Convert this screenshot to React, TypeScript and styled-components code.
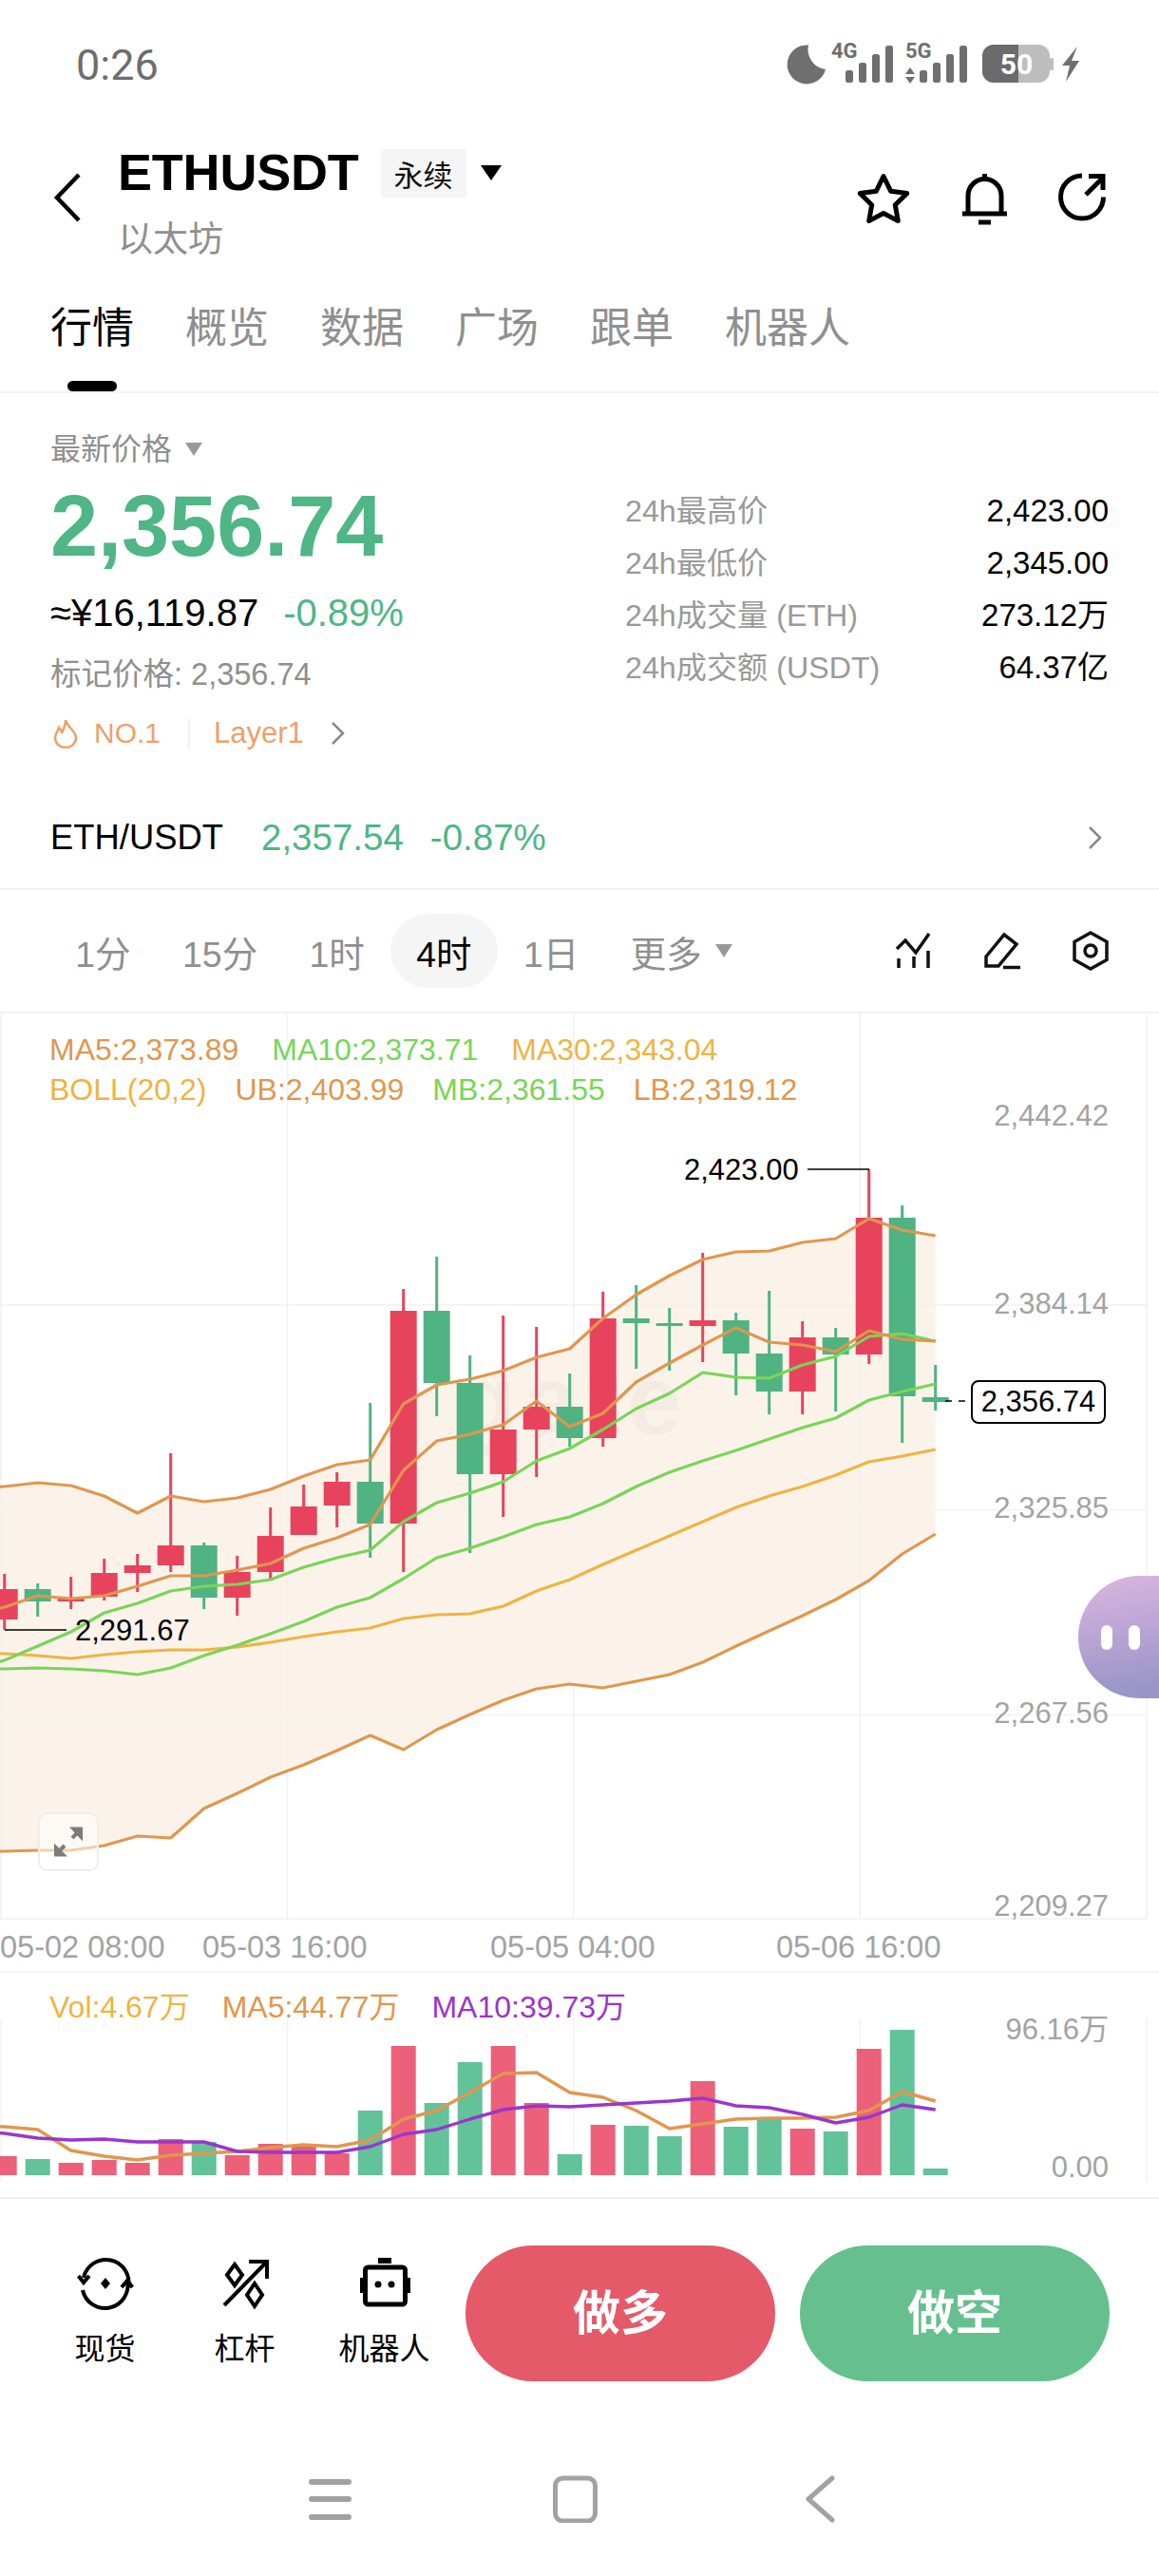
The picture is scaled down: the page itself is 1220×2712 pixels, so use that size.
import React from 'react'
import styled, { createGlobalStyle } from 'styled-components'

const GlobalStyle = createGlobalStyle`
  html, body {
    margin: 0;
    padding: 0;
    background: #fff;
  }
  body {
    font-family: "Liberation Sans", "Noto Sans CJK SC", sans-serif;
    overflow: hidden;
  }
  * {
    box-sizing: border-box;
  }
`

const colors = {
  up: '#4fb685',
  gray: '#8f8f8f',
  axis: '#a3a3a3',
  line: '#f3f3f3',
  orange: '#e0974d',
  lime: '#79d557',
  yellow: '#eeb443',
  purple: '#9b35cc',
  candleRed: '#e8435c',
  candleGreen: '#4fb382',
  barRed: '#ec6079',
  barGreen: '#62c29a',
  band: '#fbf3ea',
}

const Page = styled.div`
  width: 1220px;
  height: 2712px;
  display: flex;
  flex-direction: column;
  background: #fff;
  overflow: hidden;
`

const StatusBar = styled.div`
  height: 136px;
  display: flex;
  align-items: center;
  justify-content: space-between;
  padding: 0 45px 0 80px;
`

const Clock = styled.div`
  font-family: Roboto, sans-serif;
  font-size: 45px;
  color: #6d6d6d;
`

const Header = styled.div`
  height: 144px;
  display: flex;
  align-items: center;
  padding: 0 50px 0 52px;
`

const BackButton = styled.svg`
  width: 36px;
  height: 54px;
  margin-right: 36px;
`

const TitleBlock = styled.div`
  margin-top: 11px;
  flex: 1;
`

const TitleRow = styled.div`
  height: 51px;
  display: flex;
  align-items: center;
`

const Symbol = styled.div`
  font-size: 54px;
  line-height: 51px;
  font-weight: bold;
  letter-spacing: -0.2px;
  color: #000;
  margin-top: -2px;
`

const Badge = styled.div`
  width: 90px;
  height: 51px;
  margin-left: 23px;
  background: #f5f5f5;
  display: flex;
  align-items: center;
  justify-content: center;
  font-size: 31px;
  color: #111;
`

const Caret = styled.div<{ $w: number; $h: number; $color: string }>`
  width: 0;
  height: 0;
  border-left: ${p => p.$w / 2}px solid transparent;
  border-right: ${p => p.$w / 2}px solid transparent;
  border-top: ${p => p.$h}px solid ${p => p.$color};
  margin-left: ${p => (p.$w > 20 ? 15 : 14)}px;
`

const SubTitle = styled.div`
  margin-top: 26px;
  font-size: 37px;
  line-height: 37px;
  color: ${colors.gray};
`

const HeaderIcons = styled.div`
  display: flex;
  gap: 44px;
  margin-top: 1px;
`

const HeaderIcon = styled.svg`
  width: 60px;
  height: 60px;
  fill: none;
  stroke: #000;
  stroke-width: 5;
`

const TabBar = styled.div`
  height: 134px;
  display: flex;
  gap: 54px;
  padding-left: 53px;
  border-bottom: 2px solid ${colors.line};
`

const Tab = styled.div<{ $active?: boolean }>`
  position: relative;
  padding-top: 44px;
  font-size: 44px;
  line-height: 44px;
  color: ${p => (p.$active ? '#000' : colors.gray)};

  ${p => p.$active && `
    &::after {
      content: "";
      position: absolute;
      left: 18px;
      bottom: 0;
      width: 52px;
      height: 11px;
      border-radius: 6px;
      background: #000;
    }
  `}
`

const InfoSection = styled.div`
  height: 417px;
  display: flex;
  justify-content: space-between;
  padding: 39px 53px 0;
`

const InfoLeft = styled.div`
  display: flex;
  flex-direction: column;
`

const LabelRow = styled.div`
  display: flex;
  align-items: center;
  font-size: 32px;
  line-height: 40px;
  color: ${colors.gray};
`

const BigPrice = styled.div`
  margin-top: 16px;
  font-size: 90px;
  line-height: 90px;
  font-weight: bold;
  color: ${colors.up};
`

const ConvertRow = styled.div`
  margin-top: 24px;
  display: flex;
  gap: 26px;
  line-height: 44px;
`

const Converted = styled.span`
  font-size: 40px;
  color: #000;
`

const Change = styled.span`
  font-size: 40px;
  color: ${colors.up};
`

const MarkPrice = styled.div`
  margin-top: 23px;
  font-size: 32.5px;
  line-height: 40px;
  color: ${colors.gray};
`

const TagRow = styled.div`
  margin-top: 22px;
  height: 40px;
  display: flex;
  align-items: center;
  font-size: 30px;
  color: #eda06a;
`

const TagIcon = styled.svg`
  width: 28px;
  height: 32px;
  margin: 0 16px 0 2px;
  fill: none;
  stroke: #eda06a;
  stroke-width: 2.5;
`

const TagDivider = styled.div`
  width: 2px;
  height: 33px;
  margin: 0 25px 0 29px;
  background: #f2f2f2;
`

const TagCategory = styled.span`
  font-size: 31px;
`

const Chevron = styled.svg<{ $ml?: number }>`
  width: 18px;
  height: 28px;
  margin-left: ${p => p.$ml ?? 0}px;
  fill: none;
  stroke: #888;
  stroke-width: 2.5;
`

const StatTable = styled.div`
  width: 509px;
  margin-top: 57px;
`

const StatRow = styled.div`
  height: 55px;
  display: flex;
  align-items: center;
  justify-content: space-between;
  line-height: 40px;
`

const StatLabel = styled.span`
  font-size: 32.2px;
  color: #9a9a9a;
`

const StatValue = styled.span`
  font-size: 33px;
  color: #000;
`

const PairRow = styled.div`
  height: 106px;
  padding: 0 58px 2px 53px;
  display: flex;
  align-items: center;
  border-bottom: 2px solid ${colors.line};
`

const PairName = styled.div`
  font-size: 36.4px;
  color: #000;
  margin-right: 40px;
`

const PairValue = styled.div`
  font-size: 38.5px;
  color: ${colors.up};
  margin-right: 28px;
`

const Spacer = styled.div`
  flex: 1;
`

const RangeRow = styled.div`
  height: 130px;
  padding: 0 50px 0 52px;
  display: flex;
  align-items: center;
  border-bottom: 2px solid ${colors.line};
`

const RangeItem = styled.div<{ $active?: boolean }>`
  height: 78px;
  padding: 0 27.2px;
  display: flex;
  align-items: center;
  font-size: 37.5px;
  border-radius: 39px;
  color: ${p => (p.$active ? '#000' : colors.gray)};
  background: ${p => (p.$active ? '#f5f5f5' : 'transparent')};
`

const RangeIcons = styled.div`
  display: flex;
  gap: 49px;
`

const RangeIcon = styled.svg`
  width: 44px;
  height: 44px;
  fill: none;
  stroke: #111;
  stroke-width: 3.5;
`

const ChartPanel = styled.div`
  position: relative;
  height: 1010px;
  border-bottom: 2px solid ${colors.line};
`

const VolumePanel = styled.div`
  position: relative;
  height: 238px;
  border-bottom: 2px solid #f0f0f0;
`

const ChartCanvas = styled.svg`
  position: absolute;
  left: 0;
  top: 0;
  width: 1220px;
`

const Legend = styled.div<{ $top: number }>`
  position: relative;
  padding: ${p => p.$top}px 0 0 52px;
`

const LegendRow = styled.div<{ $gap: number }>`
  display: flex;
  gap: ${p => p.$gap}px;
  height: 42px;
  line-height: 42px;
  font-size: 32px;
  white-space: nowrap;
`

const LegendItem = styled.span<{ $color: string }>`
  color: ${p => p.$color};
`

const ChartLabel = styled.div<{ $x: number; $y: number; $w?: number; $align?: string; $color?: string; $size?: number }>`
  position: absolute;
  left: ${p => p.$x}px;
  top: ${p => p.$y}px;
  width: ${p => p.$w ?? 200}px;
  transform: translateY(-50%);
  text-align: ${p => p.$align ?? 'left'};
  font-size: ${p => p.$size ?? 31}px;
  line-height: 40px;
  color: ${p => p.$color ?? '#000'};
  white-space: nowrap;
`

const PriceTag = styled.div`
  position: absolute;
  left: 1022px;
  top: 386px;
  width: 142px;
  height: 46px;
  display: flex;
  align-items: center;
  justify-content: center;
  border: 2px solid #000;
  border-radius: 8px;
  background: #fff;
  font-size: 31px;
  color: #000;
`

const ExpandButton = styled.div`
  position: absolute;
  left: 40px;
  top: 841px;
  width: 64px;
  height: 62px;
  display: flex;
  align-items: center;
  justify-content: center;
  border: 2px solid #f0eeeb;
  border-radius: 10px;
  background: rgba(255, 255, 255, 0.55);
`

const FloatBot = styled.div`
  position: absolute;
  right: 0;
  top: 592px;
  width: 85px;
  height: 129px;
  padding-left: 24px;
  display: flex;
  align-items: center;
  gap: 17px;
  border-radius: 65px 0 0 65px;
  background: linear-gradient(170deg, #dcb6e0 0%, #9a95c8 90%);
`

const BotEye = styled.div`
  width: 12px;
  height: 26px;
  border-radius: 6px;
  background: #fff;
`

const ActionBar = styled.div`
  height: 245px;
  padding: 49px 52px 0 37px;
  display: flex;
  align-items: flex-start;
`

const Tool = styled.div`
  width: 147px;
  padding-top: 10px;
  display: flex;
  flex-direction: column;
  align-items: center;
  font-size: 32px;
  color: #000;
`

const ToolIcon = styled.svg`
  width: 60px;
  height: 60px;
  fill: none;
  stroke: #000;
  stroke-width: 4;
`

const ToolLabel = styled.div`
  margin-top: 19px;
  line-height: 40px;
`

const TradeButton = styled.div<{ $color: string }>`
  width: 326px;
  height: 143px;
  padding-bottom: 10px;
  margin-left: ${p => (p.$color === '#e45a69' ? 12 : 26)}px;
  display: flex;
  align-items: center;
  justify-content: center;
  border-radius: 72px;
  background: ${p => p.$color};
  color: #fff;
  font-size: 50px;
  font-weight: 700;
`

const NavBar = styled.div`
  padding: 46px 0 0 325px;
  display: flex;
  gap: 212px;
`

const NavIcon = styled.svg<{ $w: number }>`
  width: ${p => p.$w}px;
  height: 50px;
  fill: none;
  stroke: #a2a2a2;
  stroke-width: 5;
`

type Candle = [string, number, number, number, number]

const r = 'r'
const g = 'g'

const candles: Candle[] = [
  [r, 1657, 1673, 1705, 1716],
  [g, 1667, 1673, 1686, 1702],
  [r, 1660, 1682, 1686, 1694],
  [r, 1641, 1656, 1681, 1685],
  [r, 1636, 1648, 1656, 1676],
  [r, 1530, 1627, 1648, 1655],
  [g, 1624, 1627, 1682, 1694],
  [r, 1638, 1655, 1682, 1701],
  [r, 1587, 1617, 1655, 1662],
  [r, 1563, 1586, 1616, 1616],
  [r, 1550, 1560, 1585, 1608],
  [g, 1477, 1560, 1604, 1640],
  [r, 1357, 1380, 1604, 1655],
  [g, 1323, 1380, 1456, 1491],
  [g, 1427, 1456, 1552, 1635],
  [r, 1385, 1505, 1552, 1597],
  [r, 1397, 1481, 1505, 1555],
  [g, 1446, 1481, 1514, 1523],
  [r, 1360, 1388, 1514, 1523],
  [g, 1353, 1388, 1393, 1441],
  [g, 1377, 1393, 1396, 1443],
  [r, 1319, 1390, 1396, 1434],
  [g, 1382, 1390, 1425, 1469],
  [g, 1359, 1425, 1465, 1489],
  [r, 1391, 1408, 1465, 1489],
  [g, 1398, 1408, 1426, 1486],
  [r, 1231, 1282, 1426, 1436],
  [g, 1269, 1282, 1470, 1519],
  [g, 1437, 1471, 1476, 1485],
]

// the first value of each series sits one candle left of the screen edge
const ub = [1566, 1565, 1561, 1564, 1575, 1593, 1575, 1581, 1577, 1568, 1554, 1542, 1537, 1478, 1458, 1452, 1443, 1429, 1420, 1388, 1363, 1343, 1326, 1318, 1317, 1308, 1304, 1283, 1295, 1301]
const ma5 = [1700, 1692, 1680, 1683, 1680, 1670, 1659, 1659, 1653, 1646, 1630, 1619, 1605, 1548, 1517, 1510, 1500, 1475, 1502, 1488, 1455, 1435, 1416, 1398, 1413, 1416, 1423, 1401, 1410, 1412]
const ma10 = [1756, 1748, 1733, 1718, 1698, 1688, 1675, 1670, 1668, 1663, 1650, 1640, 1632, 1602, 1582, 1572, 1560, 1538, 1525, 1505, 1483, 1467, 1445, 1450, 1451, 1437, 1428, 1407, 1404, 1412]
const mb = [1757, 1757, 1756, 1757, 1759, 1763, 1756, 1743, 1732, 1720, 1707, 1692, 1682, 1662, 1640, 1630, 1618, 1605, 1597, 1583, 1565, 1550, 1538, 1527, 1515, 1503, 1493, 1474, 1465, 1457]
const ma30 = [1739, 1741, 1743, 1746, 1742, 1739, 1737, 1737, 1734, 1729, 1723, 1718, 1714, 1704, 1700, 1699, 1691, 1675, 1663, 1647, 1632, 1617, 1602, 1587, 1575, 1565, 1553, 1539, 1533, 1526]
const lb = [1950, 1949, 1948, 1948, 1943, 1933, 1935, 1904, 1888, 1871, 1858, 1843, 1827, 1842, 1821, 1805, 1790, 1778, 1773, 1777, 1770, 1763, 1750, 1733, 1717, 1701, 1684, 1664, 1636, 1615]

const volBars: [string, number][] = [
  [r, 2270], [g, 2273], [r, 2277], [r, 2274], [r, 2277], [r, 2252], [g, 2255], [r, 2269], [r, 2257], [r, 2258],
  [r, 2267], [g, 2222], [r, 2154], [g, 2214], [g, 2171], [r, 2154], [r, 2214], [g, 2268], [r, 2237], [g, 2238],
  [g, 2249], [r, 2191], [g, 2239], [g, 2230], [r, 2241], [g, 2244], [r, 2157], [g, 2137], [g, 2283],
]
const volMa5 = [2238, 2239, 2242, 2264, 2270, 2274, 2269, 2267, 2265, 2261, 2258, 2260, 2253, 2231, 2222, 2203, 2183, 2182, 2203, 2208, 2222, 2241, 2236, 2231, 2230, 2230, 2229, 2222, 2202, 2212]
const volMa10 = [2243, 2246, 2251, 2253, 2252, 2255, 2255, 2255, 2265, 2266, 2266, 2266, 2260, 2247, 2242, 2231, 2221, 2217, 2218, 2216, 2214, 2212, 2209, 2217, 2219, 2226, 2235, 2229, 2216, 2221]

const xAt = (i: number) => 4.7 + i * 35
const toPoints = (ys: number[]) => ys.map((y, i) => `${xAt(i - 1)},${y}`).join(' ')

const bandPoints = `${toPoints(ub)} ${lb.map((y, i) => `${xAt(i - 1)},${y}`).reverse().join(' ')}`

const gridX = [1, 302.5, 603.8, 905, 1207]
const gridY = [1374, 1589.5, 1805.5, 2020]

const axisLabels: [string, number][] = [
  ['2,442.42', 1175],
  ['2,384.14', 1373],
  ['2,325.85', 1588],
  ['2,267.56', 1804],
  ['2,209.27', 2007],
]

const timeLabels: [string, number][] = [
  ['05-02 08:00', 0],
  ['05-03 16:00', 213],
  ['05-05 04:00', 516],
  ['05-06 16:00', 817],
]

const CHART_TOP = 1067
const VOL_TOP = 2077

function StatusIcons() {
  const bars = (x: number[]) => x.map((bx, i) => (
    <rect key={bx} x={bx} y={[73, 65, 56, 47][i]} width={8} height={86 - [73, 65, 56, 47][i]} rx={2.5} />
  ))
  return (
    <svg width="355" height="55" viewBox="820 40 355 55" fill="#6f6f6f">
      <path d="M851 46.5 A20.5 20.5 0 1 0 869 72 A 21 21 0 0 1 851 46.5Z" />
      <text x="875" y="60" fontFamily="Roboto, sans-serif" fontWeight="bold" fontSize="22">4G</text>
      {bars([890, 904, 918, 932])}
      <text x="953" y="60" fontFamily="Roboto, sans-serif" fontWeight="bold" fontSize="22">5G</text>
      <polygon points="958,70 953,77 963,77" />
      <polygon points="953,80 963,80 958,87" />
      {bars([968, 982, 996, 1010])}
      <rect x="1034" y="46" width="71" height="40" rx="12" fill="#bdbdbd" />
      <rect x="1105" y="60" width="4" height="13" rx="1.5" fill="#bdbdbd" />
      <path d="M1046 46 H1072 V86 H1046 A12 12 0 0 1 1034 74 V58 A12 12 0 0 1 1046 46Z" fill="#6b6b6b" />
      <text x="1070" y="77" textAnchor="middle" fontFamily="Roboto, sans-serif" fontWeight="bold" fontSize="30" fill="#fff">50</text>
      <polygon points="1134,48 1118,68 1126,68 1122,85 1136,63 1128,63" />
    </svg>
  )
}

function PriceChart() {
  return (
    <ChartCanvas height="1010" viewBox={`0 ${CHART_TOP} 1220 1010`}>
      <polygon points={bandPoints} fill={colors.band} />
      {gridX.map(x => <line key={x} x1={x} x2={x} y1={CHART_TOP} y2={2020} stroke="#f1f1f1" strokeWidth="1.5" />)}
      {gridY.map(y => <line key={y} x1={0} x2={1207} y1={y} y2={y} stroke="#f1f1f1" strokeWidth="1.5" />)}
      <text x="480" y="1510" fontFamily="Liberation Sans" fontWeight="bold" fontSize="104" letterSpacing="8" fill="#000" opacity="0.025">gate</text>
      {candles.map((c, i) => {
        const color = c[0] === r ? colors.candleRed : colors.candleGreen
        return (
          <g key={i} fill={color}>
            <rect x={xAt(i) - 1.5} y={c[1]} width={3} height={c[4] - c[1]} />
            <rect x={xAt(i) - 14} y={c[2]} width={28} height={c[3] - c[2]} />
          </g>
        )
      })}
      <g fill="none" strokeWidth="3.2" strokeLinejoin="round">
        <polyline points={toPoints(ub)} stroke={colors.orange} />
        <polyline points={toPoints(lb)} stroke={colors.orange} />
        <polyline points={toPoints(ma30)} stroke={colors.yellow} />
        <polyline points={toPoints(mb)} stroke={colors.lime} />
        <polyline points={toPoints(ma10)} stroke={colors.lime} />
        <polyline points={toPoints(ma5)} stroke={colors.orange} />
      </g>
      <polyline points="850,1231 915,1231" fill="none" stroke="#000" strokeWidth="1.6" />
      <polyline points="5,1716 70,1716" fill="none" stroke="#000" strokeWidth="1.6" />
      <line x1="995" x2="1022" y1="1475" y2="1475" stroke="#000" strokeWidth="1.6" strokeDasharray="7 7" />
    </ChartCanvas>
  )
}

function VolumeChart() {
  return (
    <ChartCanvas height="236" viewBox={`0 ${VOL_TOP} 1220 236`}>
      {gridX.map(x => <line key={x} x1={x} x2={x} y1={2125} y2={2297} stroke="#f3f3f3" strokeWidth="1.5" />)}
      {volBars.map(([c, top], i) => (
        <rect key={i} x={xAt(i) - 13} y={top} width={26} height={2290 - top} fill={c === r ? colors.barRed : colors.barGreen} />
      ))}
      <g fill="none" strokeWidth="3.4" strokeLinejoin="round">
        <polyline points={toPoints(volMa5)} stroke={colors.orange} />
        <polyline points={toPoints(volMa10)} stroke={colors.purple} />
      </g>
    </ChartCanvas>
  )
}

function App() {
  return (
    <Page>
      <GlobalStyle />
      <StatusBar>
        <Clock>0:26</Clock>
        <StatusIcons />
      </StatusBar>

      <Header>
        <BackButton viewBox="0 0 36 54" fill="none" stroke="#000" strokeWidth="4.5">
          <polyline points="31,3 8,27 31,51" />
        </BackButton>
        <TitleBlock>
          <TitleRow>
            <Symbol>ETHUSDT</Symbol>
            <Badge>永续</Badge>
            <Caret $w={22} $h={16} $color="#000" />
          </TitleRow>
          <SubTitle>以太坊</SubTitle>
        </TitleBlock>
        <HeaderIcons>
          <HeaderIcon viewBox="0 0 60 60" strokeLinejoin="round">
            <polygon points="28,6.5 35.6,22.2 52.7,24.6 40.3,36.7 43.3,53.6 28,45.5 12.7,53.6 15.7,36.7 3.3,24.6 20.4,22.2" />
          </HeaderIcon>
          <HeaderIcon viewBox="0 0 60 60">
            <path d="M30.5 4 V9" />
            <path d="M13 46 V27 a17.5 17.5 0 0 1 35 0 V46" />
            <path d="M7 46 H54" />
            <path d="M24 55 H37" />
          </HeaderIcon>
          <HeaderIcon viewBox="0 0 60 60">
            <path d="M29 6 A22.5 22.5 0 1 0 51.5 28.5" />
            <path d="M33 26 L51 8" />
            <path d="M36 6.5 H51 V21" />
          </HeaderIcon>
        </HeaderIcons>
      </Header>

      <TabBar>
        <Tab $active>行情</Tab>
        <Tab>概览</Tab>
        <Tab>数据</Tab>
        <Tab>广场</Tab>
        <Tab>跟单</Tab>
        <Tab>机器人</Tab>
      </TabBar>

      <InfoSection>
        <InfoLeft>
          <LabelRow>
            最新价格
            <Caret $w={19} $h={14} $color="#999" />
          </LabelRow>
          <BigPrice>2,356.74</BigPrice>
          <ConvertRow>
            <Converted>≈¥16,119.87</Converted>
            <Change>-0.89%</Change>
          </ConvertRow>
          <MarkPrice>标记价格: 2,356.74</MarkPrice>
          <TagRow>
            <TagIcon viewBox="0 0 28 32">
              <path d="M14 2 C15 9 25 13 25 21 A11 10 0 0 1 3 21 C3 16 6 14 7 10 C9 12 10 14 10 16 C12 12 14 7 14 2Z" />
            </TagIcon>
            NO.1
            <TagDivider />
            <TagCategory>Layer1</TagCategory>
            <Chevron $ml={27} viewBox="0 0 18 28">
              <polyline points="3,3 14,14 3,25" />
            </Chevron>
          </TagRow>
        </InfoLeft>
        <StatTable>
          <StatRow><StatLabel>24h最高价</StatLabel><StatValue>2,423.00</StatValue></StatRow>
          <StatRow><StatLabel>24h最低价</StatLabel><StatValue>2,345.00</StatValue></StatRow>
          <StatRow><StatLabel>24h成交量 (ETH)</StatLabel><StatValue>273.12万</StatValue></StatRow>
          <StatRow><StatLabel>24h成交额 (USDT)</StatLabel><StatValue>64.37亿</StatValue></StatRow>
        </StatTable>
      </InfoSection>

      <PairRow>
        <PairName>ETH/USDT</PairName>
        <PairValue>2,357.54</PairValue>
        <PairValue>-0.87%</PairValue>
        <Spacer />
        <Chevron viewBox="0 0 18 28">
          <polyline points="3,3 14,14 3,25" />
        </Chevron>
      </PairRow>

      <RangeRow>
        <RangeItem>1分</RangeItem>
        <RangeItem>15分</RangeItem>
        <RangeItem>1时</RangeItem>
        <RangeItem $active>4时</RangeItem>
        <RangeItem>1日</RangeItem>
        <RangeItem>
          更多
          <Caret $w={19} $h={14} $color="#999" />
        </RangeItem>
        <Spacer />
        <RangeIcons>
          <RangeIcon viewBox="0 0 44 44">
            <path d="M4 20 L13 11 L24 24 L38 4" />
            <path d="M6 30 V40 M22 28 V40 M37 22 V40" />
          </RangeIcon>
          <RangeIcon viewBox="0 0 44 44">
            <path d="M5 28 L24 5 L37 15 L18 38 H5 Z" />
            <path d="M23 39.5 H41" />
          </RangeIcon>
          <RangeIcon viewBox="0 0 44 44">
            <polygon points="22,3 39,12.5 39,31.5 22,41 5,31.5 5,12.5" />
            <circle cx="22" cy="22" r="6" />
          </RangeIcon>
        </RangeIcons>
      </RangeRow>

      <ChartPanel>
        <PriceChart />
        <Legend $top={17}>
          <LegendRow $gap={35}>
            <LegendItem $color={colors.orange}>MA5:2,373.89</LegendItem>
            <LegendItem $color={colors.lime}>MA10:2,373.71</LegendItem>
            <LegendItem $color={colors.yellow}>MA30:2,343.04</LegendItem>
          </LegendRow>
          <LegendRow $gap={30}>
            <LegendItem $color={colors.yellow}>BOLL(20,2)</LegendItem>
            <LegendItem $color={colors.orange}>UB:2,403.99</LegendItem>
            <LegendItem $color={colors.lime}>MB:2,361.55</LegendItem>
            <LegendItem $color={colors.orange}>LB:2,319.12</LegendItem>
          </LegendRow>
        </Legend>
        {axisLabels.map(([text, y]) => (
          <ChartLabel key={text} $x={967} $y={y - CHART_TOP} $align="right" $color={colors.axis}>{text}</ChartLabel>
        ))}
        {timeLabels.map(([text, x]) => (
          <ChartLabel key={text} $x={x} $y={2050 - CHART_TOP} $color={colors.axis} $size={32.5}>{text}</ChartLabel>
        ))}
        <ChartLabel $x={720} $y={1232 - CHART_TOP}>2,423.00</ChartLabel>
        <ChartLabel $x={79} $y={1717 - CHART_TOP}>2,291.67</ChartLabel>
        <PriceTag>2,356.74</PriceTag>
        <ExpandButton>
          <svg width="40" height="40" viewBox="0 0 40 40" fill="#7c7c7c" stroke="none">
            <polygon points="35,4.5 21,4.5 35,19.5" />
            <polygon points="5,35.5 5,21.5 19,35.5" />
            <path d="M29 11 L24 16 M11 29 L16 24" stroke="#7c7c7c" strokeWidth="4" />
          </svg>
        </ExpandButton>
        <FloatBot>
          <BotEye />
          <BotEye />
        </FloatBot>
      </ChartPanel>

      <VolumePanel>
        <VolumeChart />
        <Legend $top={15}>
          <LegendRow $gap={34}>
            <LegendItem $color={colors.yellow}>Vol:4.67万</LegendItem>
            <LegendItem $color={colors.orange}>MA5:44.77万</LegendItem>
            <LegendItem $color={colors.purple}>MA10:39.73万</LegendItem>
          </LegendRow>
        </Legend>
        <ChartLabel $x={967} $y={2137 - VOL_TOP} $align="right" $color={colors.axis}>96.16万</ChartLabel>
        <ChartLabel $x={967} $y={2282 - VOL_TOP} $align="right" $color={colors.axis}>0.00</ChartLabel>
      </VolumePanel>

      <ActionBar>
        <Tool>
          <ToolIcon viewBox="0 0 60 60">
            <path d="M54 34 A24 24 0 0 0 7 24 M6 37 A24 24 0 0 0 53 27" />
            <path d="M1.5 22 L7 29 L13 22 M47 34 L53 27 L58.5 34" />
            <polygon points="30,24 35,30 30,36 25,30" fill="#000" stroke="none" />
          </ToolIcon>
          <ToolLabel>现货</ToolLabel>
        </Tool>
        <Tool>
          <ToolIcon viewBox="0 0 60 60">
            <path d="M8 53 L52 8" />
            <path d="M34 7 H53 V25" />
            <polygon points="19,10 27,21 19,32 11,21" />
            <polygon points="40,30 48,42 40,54 32,42" />
          </ToolIcon>
          <ToolLabel>杠杆</ToolLabel>
        </Tool>
        <Tool>
          <ToolIcon viewBox="0 0 60 60">
            <rect x="9.5" y="13" width="42" height="39" rx="3" strokeWidth="5" />
            <rect x="23" y="3" width="14" height="6" fill="#000" stroke="none" />
            <rect x="4" y="24" width="4" height="16" fill="#000" stroke="none" />
            <rect x="53" y="24" width="4" height="16" fill="#000" stroke="none" />
            <circle cx="23" cy="31" r="3.5" fill="#000" stroke="none" />
            <circle cx="37" cy="31" r="3.5" fill="#000" stroke="none" />
          </ToolIcon>
          <ToolLabel>机器人</ToolLabel>
        </Tool>
        <TradeButton $color="#e45a69">做多</TradeButton>
        <TradeButton $color="#65c08e">做空</TradeButton>
      </ActionBar>

      <NavBar>
        <NavIcon $w={45} viewBox="0 0 45 50" fill="#a2a2a2" stroke="none">
          <rect x="0" y="4" width="45" height="6" rx="3" fill="#a2a2a2" stroke="none" />
          <rect x="0" y="22" width="45" height="6" rx="3" fill="#a2a2a2" stroke="none" />
          <rect x="0" y="41" width="45" height="6" rx="3" fill="#a2a2a2" stroke="none" />
        </NavIcon>
        <NavIcon $w={47} viewBox="0 0 47 50">
          <rect x="2.5" y="3" width="42" height="45" rx="8" />
        </NavIcon>
        <NavIcon $w={44} viewBox="0 0 44 50">
          <polyline points="35,3 10,25 35,47" strokeLinecap="round" strokeLinejoin="round" />
        </NavIcon>
      </NavBar>
    </Page>
  )
}

export default App
